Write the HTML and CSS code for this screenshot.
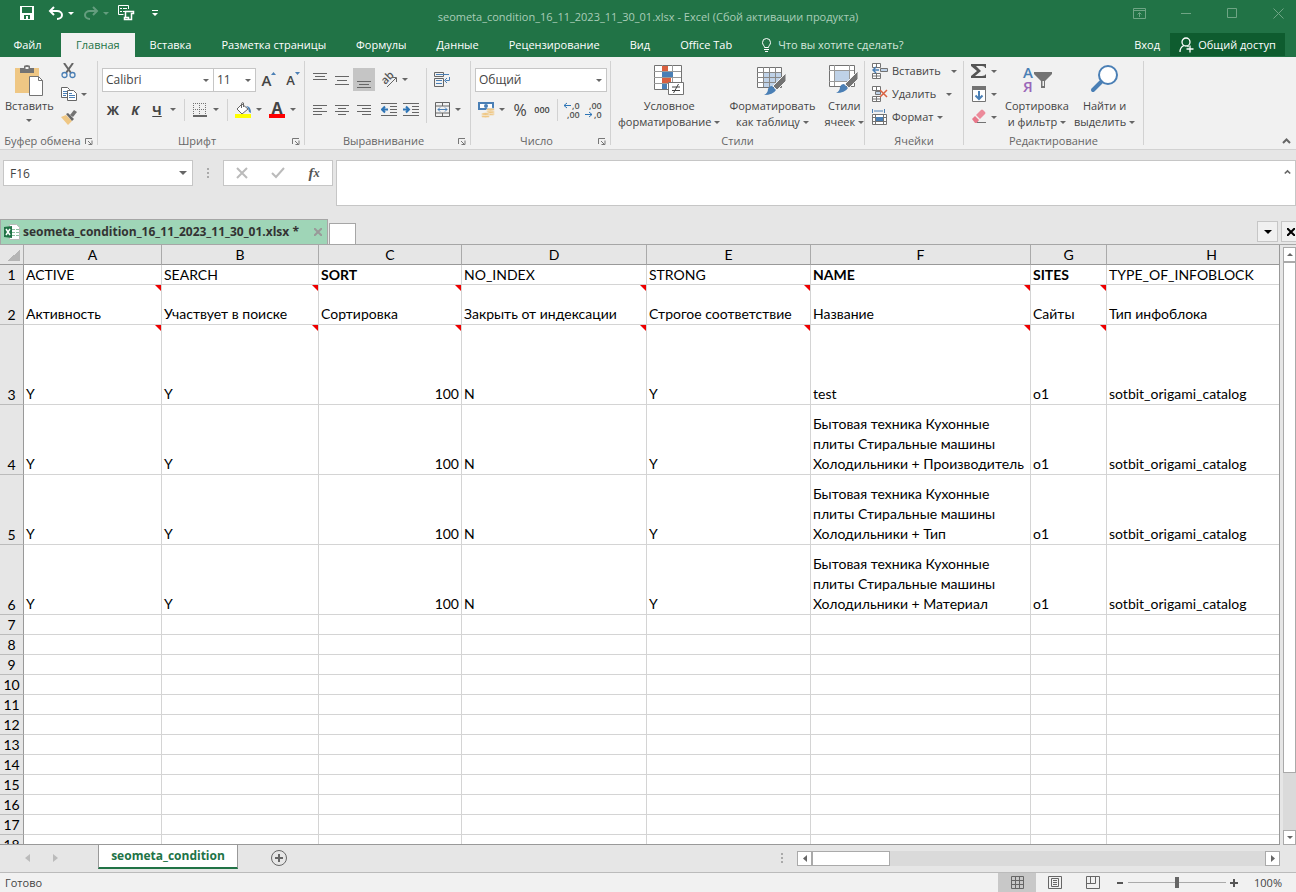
FILE: index.html
```
<!DOCTYPE html>
<html lang="ru">
<head>
    <meta charset="UTF-8">
    <meta name="viewport" content="width=device-width, initial-scale=1.0">
    <title>seometa_condition_16_11_2023_11_30_01.xlsx - Excel</title>
    <link rel="stylesheet" href="styles.css">
</head>
<body>
    <header class="titlebar">
        <div class="quick-access">
            <button class="qa save" aria-label="Сохранить"><svg width="14" height="14" viewBox="0 0 14 14"><path d="M0 0h14v14H0z" fill="#fff"/><path d="M2 1h10v6H2zM4 9h6v4H8v-3H6v3H4z" fill="#217346"/></svg></button>
            <button class="qa undo" aria-label="Отменить"><svg width="16" height="14" viewBox="0 0 16 14" fill="none" stroke="#fff" stroke-width="2"><path d="M6 1L2 5l4 4M2 5h7c3 0 5 2 5 4s-2 4-5 4"/></svg><span class="caret"></span></button>
            <button class="qa redo" aria-label="Вернуть"><svg width="16" height="14" viewBox="0 0 16 14" fill="none" stroke="#fff" stroke-width="2"><path d="M10 1l4 4-4 4M14 5H7C4 5 2 7 2 9s2 4 5 4"/></svg><span class="caret"></span></button>
            <button class="qa touch" aria-label="Режим"><svg width="17" height="16" viewBox="0 0 17 16" fill="none" stroke="#fff"><path d="M10.500 4V.5H.5v9h5M2 3.500h2M5 3.500h4M2 6.500h2M5 6.500h3" /><path d="M7.500 13V6.500h8v2h-2v6h-7v-2h4v2" stroke-width="1.500"/></svg></button>
            <button class="qa more" aria-label="Настройка панели"><svg width="6" height="7" viewBox="0 0 6 7" fill="#fff"><path d="M0 0h6v1H0zM0 3h6L3 6z"/></svg></button>
        </div>
        <div class="doc-title">seometa_condition_16_11_2023_11_30_01.xlsx - Excel (Сбой активации продукта)</div>
        <div class="window-buttons">
            <button aria-label="Параметры ленты"><svg width="13" height="11" viewBox="0 0 13 11"><path d="M.5.5h12v10H.5zM.5 2.500h12M6.500 9V5M4.500 6.500l2-2 2 2"/></svg></button>
            <button aria-label="Свернуть"><svg width="11" height="11" viewBox="0 0 11 11"><path d="M0 5.500h10"/></svg></button>
            <button aria-label="Развернуть"><svg width="11" height="11" viewBox="0 0 11 11"><path d="M.5.5h9v9h-9z"/></svg></button>
            <button aria-label="Закрыть"><svg width="11" height="11" viewBox="0 0 11 11"><path d="M.5.5l10 10M10.500.5l-10 10"/></svg></button>
        </div>
    </header>

    <nav class="ribbon-tabs">
        <button class="tab file">Файл</button>
        <button class="tab active">Главная</button>
        <button class="tab">Вставка</button>
        <button class="tab">Разметка страницы</button>
        <button class="tab">Формулы</button>
        <button class="tab">Данные</button>
        <button class="tab">Рецензирование</button>
        <button class="tab">Вид</button>
        <button class="tab">Office Tab</button>
        <button class="tab tell-me"><svg width="9" height="14" viewBox="0 0 9 14" fill="none" stroke="#fff"><path d="M2.500 9.500C2.500 7.500.5 7 .5 4.500a4 4 0 0 1 8 0C8.500 7 6.500 7.500 6.500 9.500z"/><path d="M2 11.500h5M3 13.500h3"/></svg>Что вы хотите сделать?</button>
        <button class="tab login">Вход</button>
        <button class="share"><svg width="15" height="16" viewBox="0 0 15 16" fill="none" stroke="#fff" stroke-width="1.300"><circle cx="7" cy="5" r="4"/><path d="M5 8.500C2.500 9.500 1 12 1 15M8.500 9l1 1M7.500 12h7M11 8.500v7"/></svg>Общий доступ</button>
    </nav>

    <section class="ribbon">
        <div class="group clipboard">
            <div class="group-body">
                <button class="big paste">
                    <svg width="28" height="31" viewBox="0 0 28 31"><path d="M0 3h24v25H0z" fill="#efc784"/><path d="M5 3h4V1.500Q9 0 12 0t3 1.500V3h4v5H5z" fill="#737373"/><path d="M10.500 2h3v2h-3z" fill="#f1f1f1"/><path d="M14.500 11.500h9l4 4v15h-13z" fill="#fff" stroke="#737373"/><path d="M23.500 11.500v4h4" fill="none" stroke="#737373"/></svg>
                    <span>Вставить</span><span class="caret"></span>
                </button>
                <div class="stack">
                    <button class="row-btn" aria-label="Вырезать"><svg width="15" height="16" viewBox="0 0 15 16" fill="none"><path d="M3 0l7 10M12 0L5 10" stroke="#666" stroke-width="2"/><circle cx="3.500" cy="12" r="2.500" stroke="#4a7fb5" stroke-width="1.300"/><circle cx="11.500" cy="12" r="2.500" stroke="#4a7fb5" stroke-width="1.300"/></svg></button>
                    <button class="row-btn" aria-label="Копировать"><svg width="16" height="14" viewBox="0 0 16 14" fill="#fff" stroke="#666"><path d="M.5.5h6l2 2v8h-8z"/><path d="M2 4.500h4M2 6.500h4M2 8.500h3" stroke="#4a7fb5"/><path d="M6.500 3.500h6l3 3v7h-9z"/><path d="M8 8.500h6M8 10.500h6M8 6.500h3" stroke="#4a7fb5"/></svg><span class="caret"></span></button>
                    <button class="row-btn" aria-label="Формат по образцу"><svg width="16" height="15" viewBox="0 0 16 15"><path d="M0 7l5-2 6 6-4 4z" fill="#efc784"/><path d="M5 4l2-1 6 6-2 2z" fill="#666"/><path d="M9 5l4-5 3 2-4 5z" fill="#737373"/></svg></button>
                </div>
            </div>
            <div class="group-label"><span>Буфер обмена</span><svg class="launcher" width="8" height="7" viewBox="0 0 8 7"><path d="M.5 6V.5H7M3 3l3 3M7 2.500v4H3.500" /></svg></div>
        </div>

        <div class="group font">
            <div class="group-body rows">
                <div class="line">
                    <span class="select-box font-name"><select aria-label="Шрифт"><option>Calibri</option></select><span class="caret"></span></span>
                    <span class="select-box font-size"><select aria-label="Размер шрифта"><option>11</option></select><span class="caret"></span></span>
                    <button class="tool letter" aria-label="Увеличить размер">A<svg width="5" height="3" viewBox="0 0 5 3"><path d="M0 3h5L2.500 0z" fill="#4a7fb5"/></svg></button>
                    <button class="tool letter small" aria-label="Уменьшить размер">A<svg width="5" height="3" viewBox="0 0 5 3"><path d="M0 0h5L2.500 3z" fill="#4a7fb5"/></svg></button>
                </div>
                <div class="line">
                    <button class="tool"><b>Ж</b></button>
                    <button class="tool"><b><i>К</i></b></button>
                    <button class="tool"><b><u>Ч</u></b></button><span class="caret"></span>
                    <span class="vsep"></span>
                    <button class="tool" aria-label="Границы"><svg width="14" height="14" viewBox="0 0 14 14" fill="none" stroke="#737373" stroke-dasharray="1 1"><path d="M.5 0v13M6.500 0v13M12.500 0v13M0 .5h13M0 6.500h13"/><path d="M0 13h14" stroke-width="2" stroke-dasharray="none" stroke="#666"/></svg></button><span class="caret"></span>
                    <span class="vsep"></span>
                    <button class="tool" aria-label="Заливка"><svg width="17" height="16" viewBox="0 0 17 16"><path d="M7 2l6 5-6 5-5-5z" fill="#fff" stroke="#666"/><path d="M6.500 6V1.500Q7 0 8.500 1v4" fill="none" stroke="#666"/><path d="M11 4q5 0 5 7l-2-1-1-4z" fill="#4a7fb5"/><path d="M0 12h16v4H0z" fill="#ff0"/></svg></button><span class="caret"></span>
                    <button class="tool font-color" aria-label="Цвет текста"><b>A</b></button><span class="caret"></span>
                </div>
            </div>
            <div class="group-label"><span>Шрифт</span><svg class="launcher" width="8" height="7" viewBox="0 0 8 7"><path d="M.5 6V.5H7M3 3l3 3M7 2.500v4H3.500" /></svg></div>
        </div>

        <div class="group align">
            <div class="group-body">
                <div class="rows">
                    <div class="line">
                        <button class="tool" aria-label="По верхнему краю"><svg class="lines" width="14" height="16"><path d="M0 1.500h14M2 4.500h10M0 7.500h14"/></svg></button>
                        <button class="tool" aria-label="По середине"><svg class="lines" width="14" height="16"><path d="M0 4.500h14M2 8.500h10M0 12.500h14"/></svg></button>
                        <button class="tool pressed" aria-label="По нижнему краю"><svg class="lines" width="14" height="16"><path d="M0 9.500h14M2 12.500h10M0 15.500h14"/></svg></button>
                        <button class="tool turn" aria-label="Ориентация"><svg class="turn-icon" width="17" height="16" viewBox="0 0 17 16"><text x="1" y="11" transform="rotate(-45 5 8)">ab</text><path d="M6 15l9-9M11 5.500h4.500V10" fill="none" stroke="#666"/></svg></button><span class="caret"></span>
                    </div>
                    <div class="line">
                        <button class="tool" aria-label="По левому краю"><svg class="lines" width="14" height="10"><path d="M0 .5h14M0 3.500h9M0 6.500h14M0 9.500h9"/></svg></button>
                        <button class="tool" aria-label="По центру"><svg class="lines" width="14" height="10"><path d="M0 .5h14M3 3.500h8M0 6.500h14M3 9.500h8"/></svg></button>
                        <button class="tool" aria-label="По правому краю"><svg class="lines" width="14" height="10"><path d="M0 .5h14M5 3.500h9M0 6.500h14M5 9.500h9"/></svg></button>
                        <button class="tool turn" aria-label="Уменьшить отступ"><svg class="lines" width="16" height="13"><path d="M0 .5h16M9 3.500h7M9 6.500h7M9 9.500h7M0 12.500h16"/><path d="M7 6.500H1M4 3.500l-3 3 3 3" class="blue"/></svg></button>
                        <button class="tool" aria-label="Увеличить отступ"><svg class="lines" width="16" height="13"><path d="M0 .5h16M9 3.500h7M9 6.500h7M9 9.500h7M0 12.500h16"/><path d="M0 6.500h6M3 3.500l3 3-3 3" class="blue"/></svg></button>
                    </div>
                </div>
                <span class="vsep tall"></span>
                <div class="rows wrap-col">
                    <div class="line"><button class="tool" aria-label="Перенести текст"><svg width="16" height="15" fill="none" stroke="#666"><path d="M.5.500h9v4h-9zM.5 6.500h9v8h-9z"/><path d="M2 2.500h13M2 8.500h6M2 11.500h6M15.500 5v3.500h-4M13 6l-2.500 2.500L13 11" stroke="#4a7fb5"/></svg></button></div>
                    <div class="line"><button class="tool" aria-label="Объединить"><svg width="15" height="15" fill="none" stroke="#666"><path d="M.5.5h14v14H.5zM.5 4h14M.5 11h14M7.500 0v4M7.500 11v4"/><path d="M3 7.500h9M5 5.500l-2 2 2 2M10 5.500l2 2-2 2" stroke="#4a7fb5"/></svg></button><span class="caret"></span></div>
                </div>
            </div>
            <div class="group-label"><span>Выравнивание</span><svg class="launcher" width="8" height="7" viewBox="0 0 8 7"><path d="M.5 6V.5H7M3 3l3 3M7 2.500v4H3.500" /></svg></div>
        </div>

        <div class="group number">
            <div class="group-body rows">
                <div class="line"><span class="select-box number-format"><select aria-label="Числовой формат"><option>Общий</option></select><span class="caret"></span></span></div>
                <div class="line">
                    <button class="tool" aria-label="Финансовый формат"><svg width="17" height="16" viewBox="0 0 17 16"><path d="M0 0h16v8H0z" fill="#4a7fb5"/><path d="M2 2h12v4H2z" fill="#fff"/><circle cx="8" cy="4" r="2" fill="#4a7fb5"/><g fill="#efc784" stroke="#f1f1f1" stroke-width=".6"><ellipse cx="12.500" cy="12" rx="4" ry="1.500"/><ellipse cx="12.500" cy="10" rx="4" ry="1.500"/><ellipse cx="12.500" cy="7.500" rx="4" ry="1.500"/><ellipse cx="7.500" cy="14.300" rx="4" ry="1.500"/><ellipse cx="7.500" cy="12" rx="4" ry="1.500"/></g></svg></button><span class="caret"></span>
                    <button class="tool percent">%</button>
                    <button class="tool thousands">000</button>
                    <span class="vsep"></span>
                    <button class="tool" aria-label="Увеличить разрядность"><svg class="digits" width="18" height="20" viewBox="0 0 18 20"><text x="9" y="9">,0</text><text x="4" y="18">,00</text><path d="M8 5.500H1M4 3L1 5.500 4 8"/></svg></button>
                    <button class="tool" aria-label="Уменьшить разрядность"><svg class="digits" width="18" height="20" viewBox="0 0 18 20"><text x="4" y="9">,00</text><text x="9" y="18">,0</text><path d="M0 14.500h7M4 12l3 2.500L4 17"/></svg></button>
                </div>
            </div>
            <div class="group-label"><span>Число</span><svg class="launcher" width="8" height="7" viewBox="0 0 8 7"><path d="M.5 6V.5H7M3 3l3 3M7 2.500v4H3.500" /></svg></div>
        </div>

        <div class="group styles">
            <div class="group-body">
                <button class="big"><svg width="30" height="31" viewBox="0 0 30 31"><path d="M.5.5h27v24H.5z" fill="#fff" stroke="#737373"/><path d="M8.500 0v24M18.500 0v24M0 6.500h27M0 12.500h27M0 18.500h27" stroke="#999"/><path d="M8 1h6v5H8zM8 13h9v5H8z" fill="#d9603f"/><path d="M8 7h11v5H8zM8 19h5v5H8z" fill="#4a7fb5"/><path d="M14.500 17.500h15v12h-15z" fill="#fff" stroke="#737373"/><path d="M18 22h8M18 25.500h8M24.500 19l-5 9" stroke="#444" fill="none"/></svg><span>Условное</span><span class="last">форматирование<span class="caret"></span></span></button>
                <button class="big"><svg width="30" height="31" viewBox="0 0 30 31"><path d="M.5 2.500h24v20H.5z" fill="#fff" stroke="#737373"/><path d="M7 8h17v14H7z" fill="#bfd2e8"/><path d="M6.500 2v20M12.500 2v20M18.500 2v20M0 7.500h24M0 12.500h24M0 17.500h24" stroke="#888"/><path d="M29 8v8l-9 9-4-4z" fill="#737373" stroke="#f1f1f1"/><path d="M15 21l4 4q-3 5-12 5 4-2 4-6 1-3 4-3z" fill="#4a7fb5"/></svg><span>Форматировать</span><span class="last">как таблицу<span class="caret"></span></span></button>
                <button class="big"><svg width="30" height="31" viewBox="0 0 30 31"><path d="M.5.5h25v21H.5z" fill="#fff" stroke="#737373"/><path d="M6 6h14v11H6z" fill="#bfd2e8"/><path d="M5.500 0v21M20.500 0v21M0 5.500h25M0 16.500h25" stroke="#999"/><path d="M29 6v8l-9 9-4-4z" fill="#737373" stroke="#f1f1f1"/><path d="M15 19l4 4q-3 5-12 5 4-2 4-6 1-3 4-3z" fill="#4a7fb5"/></svg><span>Стили</span><span class="last">ячеек<span class="caret"></span></span></button>
            </div>
            <div class="group-label"><span>Стили</span></div>
        </div>

        <div class="group cells">
            <div class="group-body stack">
                <button class="row-btn"><svg width="16" height="16" fill="#fff" stroke="#737373"><path d="M.5.5h8v4h-8zM4.500.5v4M.5 10.500h8v5h-8zM4.500 10.500v5M.5 13h8"/><path d="M8.500 5.500h7v3h-7z" fill="#bfd2e8"/><path d="M7 7H1M4 4L1 7l3 3" stroke="#4a7fb5" stroke-width="1.500" fill="none"/></svg>Вставить<span class="caret wide"></span></button>
                <button class="row-btn"><svg width="16" height="16" fill="#fff" stroke="#737373"><path d="M.5.5h8v4h-8zM4.500.5v4M.5 10.500h8v5h-8zM4.500 10.500v5M.5 13h8"/><path d="M3.500 5.500h5v3h-5z" fill="#bfd2e8"/><path d="M8 4l7 7M15 4l-7 7" stroke="#d9603f" stroke-width="1.500"/></svg>Удалить<span class="caret wide"></span></button>
                <button class="row-btn"><svg width="16" height="16" fill="#fff" stroke="#737373"><path d="M.5 5.500h14v10H.5zM3.500 5v10M11.500 5v10M0 8.500h14M0 12.500h14"/><path d="M4 8h7v4H4z" fill="#4a7fb5" stroke="none"/><path d="M.5 0v4M12.500 0v4M2 2h9" stroke="#4a7fb5"/></svg>Формат<span class="caret"></span></button>
            </div>
            <div class="group-label"><span>Ячейки</span></div>
        </div>

        <div class="group editing">
            <div class="group-body">
                <div class="stack">
                    <button class="row-btn" aria-label="Автосумма"><svg width="16" height="16"><path d="M0 1h15v4h-1q0-2-3-2H5l5 5-6 5h7q3 0 4-2v4H0v-2l6-5-6-5z" fill="#555"/></svg><span class="caret"></span></button>
                    <button class="row-btn" aria-label="Заполнить"><svg width="16" height="16"><path d="M1.500.5h13v15h-13z" fill="#fff" stroke="#737373"/><path d="M1 0h14v4H1z" fill="#737373"/><path d="M8 5v8M4.500 9.500L8 13l3.500-3.500" stroke="#4a7fb5" stroke-width="2" fill="none"/></svg><span class="caret"></span></button>
                    <button class="row-btn" aria-label="Очистить"><svg width="16" height="16"><path d="M1 10l3-3 4 4-2 3H4z" fill="#e8798b"/><path d="M5 6l5-5q1-1 2 0l2 2q1 1 0 2L9 10z" fill="#ec8a9a"/><path d="M6 13.500h9" stroke="#737373"/></svg><span class="caret"></span></button>
                </div>
                <button class="big sort"><svg width="30" height="31" viewBox="0 0 30 31"><text x="1" y="13" class="sort-a">А</text><text x="1" y="27" class="sort-z">Я</text><path d="M12 7h18v2l-7 7v7h-4v-7l-7-7z" fill="#737373"/><path d="M20.500 16h1.500v5h-1.500z" fill="#f1f1f1"/></svg><span>Сортировка</span><span class="last">и фильтр<span class="caret"></span></span></button>
                <button class="big"><svg width="30" height="31" viewBox="0 0 30 31"><circle cx="18" cy="10" r="9" fill="#fff" stroke="#4a7fb5" stroke-width="2"/><path d="M11 17L3 25" stroke="#4a7fb5" stroke-width="4" stroke-linecap="round"/></svg><span>Найти и</span><span class="last">выделить<span class="caret"></span></span></button>
            </div>
            <div class="group-label"><span>Редактирование</span></div>
        </div>
        <button class="collapse" aria-label="Свернуть ленту"><svg width="9" height="6" viewBox="0 0 9 6"><path d="M1 5l3.500-3.500L8 5" fill="none" stroke="#666" stroke-width="2"/></svg></button>
    </section>

    <section class="formula-bar">
        <span class="select-box name-box"><input type="text" value="F16" aria-label="Имя ячейки"><span class="caret"></span></span>
        <span class="grip"></span>
        <div class="fx-buttons">
            <button aria-label="Отмена"><svg width="12" height="12"><path d="M1 1l10 10M11 1L1 11" stroke="#bbb" stroke-width="2"/></svg></button>
            <button aria-label="Ввод"><svg width="14" height="12"><path d="M1 6l4 4 8-9" stroke="#bbb" stroke-width="2" fill="none"/></svg></button>
            <button class="fx">f<small>x</small></button>
        </div>
        <div class="formula-box">
            <textarea class="formula" aria-label="Строка формул"></textarea>
            <svg class="expand" width="7" height="6" viewBox="0 0 9 6"><path d="M1 5l3.500-3.500L8 5" fill="none" stroke="#666" stroke-width="2"/></svg>
        </div>
    </section>

    <div class="doc-tabs">
        <button class="doc-tab"><svg width="16" height="16"><path d="M5.500.5h7l3 3v12h-10z" fill="#fff" stroke="#bbb"/><path d="M8 5.500h3M12 5.500h3M8 8.500h3M12 8.500h3M8 11.500h3M12 11.500h3" stroke="#8cc0a0"/><path d="M0 3l8-1v12l-8-1z" fill="#217346"/><path d="M2 5l4 6M6 5l-4 6" stroke="#fff" stroke-width="1.500"/></svg><span>seometa_condition_16_11_2023_11_30_01.xlsx *</span><svg class="tab-x" width="8" height="8"><path d="M0 0l8 8M8 0L0 8" stroke="#999" stroke-width="2"/></svg></button>
        <button class="new-tab" aria-label="Новая вкладка"></button>
        <button class="mini" aria-label="Список вкладок"><span class="caret black"></span></button>
        <button class="mini last-mini" aria-label="Закрыть вкладку"><svg width="8" height="8"><path d="M0 0l8 8M8 0L0 8" stroke="#000" stroke-width="2"/></svg></button>
    </div>

    <main class="sheet">
        <div class="grid">
            <table>
                <colgroup><col class="c-num"><col class="c-a"><col class="c-b"><col class="c-c"><col class="c-d"><col class="c-e"><col class="c-f"><col class="c-g"><col class="c-h"></colgroup>
                <thead>
                    <tr><th class="corner"></th><th>A</th><th>B</th><th>C</th><th>D</th><th>E</th><th>F</th><th>G</th><th>H</th></tr>
                </thead>
                <tbody id="rows">
                    <tr class="h20"><th>1</th><td>ACTIVE</td><td>SEARCH</td><td><b>SORT</b></td><td>NO_INDEX</td><td>STRONG</td><td><b>NAME</b></td><td><b>SITES</b></td><td>TYPE_OF_INFOBLOCK</td></tr>
                    <tr class="h40 notes"><th>2</th><td>Активность</td><td>Участвует в поиске</td><td>Сортировка</td><td>Закрыть от индексации</td><td>Строгое соответствие</td><td>Название</td><td>Сайты</td><td>Тип инфоблока</td></tr>
                    <tr class="h80 notes"><th>3</th><td>Y</td><td>Y</td><td class="num">100</td><td>N</td><td>Y</td><td>test</td><td>o1</td><td>sotbit_origami_catalog</td></tr>
                    <tr class="h70"><th>4</th><td>Y</td><td>Y</td><td class="num">100</td><td>N</td><td>Y</td><td>Бытовая техника Кухонные<br>плиты Стиральные машины<br>Холодильники + Производитель</td><td>o1</td><td>sotbit_origami_catalog</td></tr>
                    <tr class="h70"><th>5</th><td>Y</td><td>Y</td><td class="num">100</td><td>N</td><td>Y</td><td>Бытовая техника Кухонные<br>плиты Стиральные машины<br>Холодильники + Тип</td><td>o1</td><td>sotbit_origami_catalog</td></tr>
                    <tr class="h70"><th>6</th><td>Y</td><td>Y</td><td class="num">100</td><td>N</td><td>Y</td><td>Бытовая техника Кухонные<br>плиты Стиральные машины<br>Холодильники + Материал</td><td>o1</td><td>sotbit_origami_catalog</td></tr>
                </tbody>
            </table>
        </div>
        <div class="vscroll">
            <button class="scroll-btn" aria-label="Вверх"><span class="caret up"></span></button>
            <div class="vthumb"></div>
            <button class="scroll-btn bottom" aria-label="Вниз"><span class="caret"></span></button>
        </div>
    </main>

    <footer class="sheet-bar">
        <div class="sheet-nav">
            <button aria-label="Назад"><svg width="5" height="8"><path d="M5 0v8L0 4z" fill="#bbb"/></svg></button>
            <button aria-label="Вперёд"><svg width="5" height="8"><path d="M0 0v8l5-4z" fill="#bbb"/></svg></button>
        </div>
        <button class="sheet-tab">seometa_condition</button>
        <button class="add-sheet" aria-label="Новый лист"><svg width="16" height="16" fill="none" stroke="#666"><circle cx="8" cy="8" r="7.500"/><path d="M4 8h8M8 4v8" stroke-width="2"/></svg></button>
        <span class="grip hgrip"></span>
        <div class="hscroll">
            <button class="scroll-btn" aria-label="Влево"><svg width="4" height="7"><path d="M4 0v7L0 3.500z" fill="#666"/></svg></button>
            <div class="hthumb"></div>
            <button class="scroll-btn right" aria-label="Вправо"><svg width="4" height="7"><path d="M0 0v7l4-3.500z" fill="#666"/></svg></button>
        </div>
    </footer>

    <div class="status-bar">
        <span class="ready">Готово</span>
        <button class="view on" aria-label="Обычный"><svg width="13" height="13"><path d="M.5.5h12v12H.5zM4.500 0v13M8.500 0v13M0 4.500h13M0 8.500h13"/></svg></button>
        <button class="view" aria-label="Разметка"><svg width="14" height="13"><path d="M.5.5h13v12H.5zM3.500 2.500h7v8h-7zM5 4.500h4M5 6.500h4M5 8.500h4"/></svg></button>
        <button class="view" aria-label="Страничный"><svg width="14" height="13"><path d="M.5.5h13v12H.5zM4.500 0v7.500M9.500 0v7.500M0 7.500h9.500"/></svg></button>
        <button class="zoom-btn" aria-label="Уменьшить"><svg width="6" height="8"><path d="M0 4h6" stroke="#555" stroke-width="2"/></svg></button>
        <input class="zoom" type="range" min="0" max="100" value="50" aria-label="Масштаб">
        <button class="zoom-btn" aria-label="Увеличить"><svg width="8" height="8"><path d="M0 4h8M4 0v8" stroke="#555" stroke-width="2"/></svg></button>
        <span class="percent-label">100%</span>
    </div>

    <script>
        // Empty rows below the data
        const rows = document.getElementById('rows');
        for (let i = 7; i <= 18; i++) {
            const row = document.createElement('tr');
            row.className = 'h20';
            row.innerHTML = `<th>${i}</th>` + '<td></td>'.repeat(8);
            rows.appendChild(row);
        }
    </script>
</body>
</html>
```
FILE: styles.css
```
* {
    box-sizing: border-box;
}
body {
    margin: 0;
    height: 100vh;
    display: flex;
    flex-direction: column;
    overflow: hidden;
    background: #e6e6e6;
    color: #444;
    font: 11px/16px "Open Sans", "Noto Sans", sans-serif;
}
button, input, select, textarea {
    font: inherit;
    color: inherit;
    margin: 0;
    padding: 0;
    border: 0;
    border-radius: 0;
    background: none;
    white-space: nowrap;
}
button {
    display: flex;
    align-items: center;
    justify-content: center;
}
svg {
    display: block;
    flex: none;
}
.caret {
    flex: none;
    border: 3px solid transparent;
    border-top-color: #666;
    border-bottom: 0;
}
.caret.up {
    border-top: 0;
    border-bottom: 3px solid #666;
}
.caret.black {
    border-width: 4px 4px 0;
    border-top-color: #000;
}

/* Title bar */
.titlebar {
    display: flex;
    justify-content: space-between;
    height: 33px;
    flex: none;
    background: #217346;
    color: #fff;
}
.quick-access {
    display: flex;
    align-items: center;
    gap: 9px;
    width: 200px;
    padding: 0 0 7px 20px;
}
.qa {
    gap: 4px;
}
.qa .caret {
    border-top-color: #fff;
}
.save {
    margin-right: 5px;
}
.redo {
    opacity: .3;
}
.more {
    margin-left: 8px;
}
.doc-title {
    padding-top: 9px;
    color: #a9cdb8;
}
.window-buttons {
    display: flex;
    justify-content: flex-end;
    gap: 35px;
    width: 200px;
    padding: 0 12px 7px 0;
}
.window-buttons path {
    fill: none;
    stroke: #6fa585;
}

/* Ribbon tabs */
.ribbon-tabs {
    display: flex;
    height: 24px;
    flex: none;
    padding-right: 11px;
    background: #217346;
    color: #fff;
}
.tab {
    padding: 0 15px;
}
.file {
    width: 61px;
    padding: 0 6px 0 0;
}
.tab.active {
    background: #f1f1f1;
    color: #217346;
}
.tell-me {
    gap: 7px;
    color: #d5e7dc;
}
.login {
    margin-left: auto;
    padding: 0 10px;
}
.share {
    gap: 4px;
    width: 115px;
    height: 23px;
    background: #0e5c2f;
}

/* Ribbon */
.ribbon {
    display: flex;
    height: 93px;
    flex: none;
    padding: 4px 0;
    background: #f1f1f1;
    border-bottom: 1px solid #d2d2d2;
}
.group {
    display: flex;
    flex-direction: column;
    border-right: 1px solid #d2d2d2;
}
.group-body {
    display: flex;
    height: 72px;
    flex: none;
}
.rows {
    display: flex;
    flex-direction: column;
    gap: 7px;
    padding-top: 7px;
}
.line {
    display: flex;
    align-items: center;
    height: 23px;
}
.group-label {
    display: flex;
    justify-content: center;
    align-items: center;
    height: 16px;
    flex: none;
    margin-bottom: -4px;
    padding: 0 4px;
    color: #666;
}
.group-label span {
    flex: 1;
    text-align: center;
}
.launcher path {
    fill: none;
    stroke: #777;
}
.clipboard {
    width: 98px;
}
.clipboard .group-label {
    padding-left: 0;
    white-space: nowrap;
}
.font {
    width: 207px;
}
.align {
    width: 166px;
}
.number {
    width: 140px;
}
.styles {
    width: 254px;
}
.cells {
    width: 99px;
}
.editing {
    width: 180px;
}
.font .group-body, .align .group-body, .number .group-body {
    padding-left: 4px;
}
.align .rows {
    flex: none;
}
.align .group-body {
    padding-top: 7px;
}
.align .group-body .rows {
    padding-top: 0;
}
.styles .group-body {
    gap: 4px;
    padding-left: 2px;
}
.big {
    flex-direction: column;
    justify-content: flex-start;
    padding: 4px 0 0 5px;
}
.big svg {
    margin-bottom: 2px;
}
.big > .caret {
    margin-top: 5px;
}
.sort {
    padding-left: 8px;
}
.last {
    display: flex;
    align-items: center;
    gap: 3px;
}
.stack {
    display: flex;
    flex-direction: column;
    gap: 7px;
    padding: 2px 0 0 7px;
}
.row-btn {
    justify-content: flex-start;
    gap: 4px;
    height: 16px;
}
.caret.wide {
    margin-left: 6px;
}
.select-box {
    position: relative;
    display: block;
    background: #fff;
    border: 1px solid #c6c6c6;
    font-size: 12px;
}
.select-box select, .select-box input {
    appearance: none;
    display: block;
    width: 100%;
    height: 100%;
    padding: 0 3px;
}
.select-box .caret {
    position: absolute;
    right: 4px;
    top: 10px;
}
.font-name {
    width: 112px;
    height: 24px;
}
.font-size {
    width: 43px;
    height: 24px;
    margin-left: -1px;
}
.number-format {
    width: 132px;
    height: 24px;
}
.tool {
    width: 22px;
    height: 23px;
    font-size: 13px;
}
.tool + .caret {
    margin-left: 2px;
}
.letter {
    align-items: center;
    margin-left: 2px;
    font-size: 15px;
    font-weight: 600;
}
.letter svg {
    align-self: flex-start;
    margin-top: 4px;
}
.letter.small {
    font-size: 13px;
}
.vsep {
    width: 1px;
    height: 22px;
    margin: 0 4px 0 8px;
    background: #d2d2d2;
}
.vsep.tall {
    height: 55px;
    margin: 0 4px 0 4px;
}
.number .vsep {
    margin: 0 3px 0 4px;
}
.font-color {
    margin-left: 4px;
    font-size: 16px;
}
.font-color b {
    width: 16px;
    height: 17px;
    line-height: 14px;
    border-bottom: 4px solid #f00;
}
.pressed {
    background: #c5c5c5;
}
.turn {
    margin-left: 3px;
}
.turn-icon {
    overflow: visible;
}
.turn-icon text {
    font-size: 11px;
    font-weight: 600;
    fill: #555;
}
.lines path {
    fill: none;
    stroke: #666;
}
.lines .blue {
    stroke: #2e75b6;
    stroke-width: 2;
}
.percent {
    margin-left: 4px;
    font-size: 16px;
}
.thousands {
    font-size: 9px;
    font-weight: 600;
}
.digits {
    overflow: visible;
}
.digits text {
    font-size: 9px;
    font-weight: 600;
    fill: #555;
}
.digits path {
    fill: none;
    stroke: #2e75b6;
    stroke-width: 1;
}
.sort svg {
    overflow: visible;
}
.sort-a, .sort-z {
    font-size: 15px;
    font-weight: 600;
    fill: #4a7fb5;
}
.sort-z {
    fill: #9a66b8;
}
.collapse {
    align-self: flex-end;
    margin: 0 5px 1px auto;
}

/* Formula bar */
.formula-bar {
    display: flex;
    align-items: flex-start;
    height: 69px;
    flex: none;
    padding: 10px 0 0 3px;
}
.name-box {
    width: 190px;
    height: 26px;
}
.name-box input {
    padding-left: 6px;
}
.name-box .caret {
    right: 5px;
    border-width: 4px 4px 0;
}
.grip {
    width: 2px;
    height: 10px;
    margin: 8px 14px 0;
    background: repeating-linear-gradient(#aaa 0 2px, transparent 2px 4px);
}
.fx-buttons {
    display: flex;
    width: 110px;
    height: 26px;
    background: #fff;
    border: 1px solid #c6c6c6;
}
.fx-buttons button {
    flex: 1;
}
.fx {
    font: italic bold 15px/16px "Liberation Serif", serif;
    color: #555;
}
.formula-box {
    position: relative;
    flex: 1;
    height: 46px;
    margin-left: 3px;
}
.formula {
    display: block;
    width: 100%;
    height: 100%;
    resize: none;
    background: #fff;
    border: 1px solid #c6c6c6;
}
.expand {
    position: absolute;
    right: 5px;
    top: 9px;
}

/* Document tabs */
.doc-tabs {
    display: flex;
    align-items: flex-end;
    height: 26px;
    flex: none;
    border-bottom: 1px solid #a6a6a6;
}
.doc-tab {
    gap: 3px;
    width: 328px;
    height: 25px;
    justify-content: flex-start;
    padding: 0 5px 0 3px;
    background: #9fd5b7;
    border: 1px solid #a6a6a6;
    border-bottom: 0;
    color: #333;
    font-size: 12px;
    font-weight: bold;
}
.tab-x {
    margin-left: auto;
}
.new-tab {
    width: 27px;
    height: 21px;
    margin-left: 1px;
    background: #fff;
    border: 1px solid #a6a6a6;
    border-bottom: 0;
}
.mini {
    width: 21px;
    height: 21px;
    margin: 0 0 2px auto;
    background: #f0f0f0;
    border: 1px solid #c6c6c6;
}
.last-mini {
    width: 15px;
    margin-left: 3px;
    padding-left: 3px;
    border-right: 0;
}

/* Sheet */
.sheet {
    display: flex;
    flex: 1;
    min-height: 0;
}
.grid {
    flex: 1;
    min-width: 0;
    overflow: hidden;
    border-right: 1px solid #999;
    border-bottom: 1px solid #999;
}
table {
    width: 1317px;
    table-layout: fixed;
    border-collapse: separate;
    border-spacing: 0;
    background: #fff;
    color: #000;
    font: 14px/20px Lato, "Open Sans", sans-serif;
}
.c-num {
    width: 24px;
}
.c-a {
    width: 138px;
}
.c-b {
    width: 157px;
}
.c-c {
    width: 143px;
}
.c-d {
    width: 185px;
}
.c-e {
    width: 164px;
}
.c-f {
    width: 220px;
}
.c-g {
    width: 76px;
}
.c-h {
    width: 210px;
}
th {
    padding: 0;
    background: #e6e6e6;
    border-right: 1px solid #999;
    border-bottom: 1px solid #bbb;
    font-weight: normal;
    vertical-align: bottom;
    line-height: 19px;
}
thead th {
    height: 20px;
    border-right-color: #aaa;
    border-bottom-color: #999;
}
.corner {
    background: linear-gradient(135deg, transparent 50%, #b5b5b5 50%) no-repeat 8px 4px / 12px 12px #e6e6e6;
}
td {
    position: relative;
    padding: 0 2px;
    border-right: 1px solid #d4d4d4;
    border-bottom: 1px solid #d4d4d4;
    vertical-align: bottom;
    white-space: nowrap;
    line-height: 20px;
}
.h20 td {
    line-height: 19px;
}
.h20 {
    height: 20px;
}
.h40 {
    height: 40px;
}
.h70 {
    height: 70px;
}
.h80 {
    height: 80px;
}
.num {
    text-align: right;
}
/* Red comment marks in the cell corner */
.notes td::after {
    content: "";
    position: absolute;
    top: 0;
    right: 0;
    border-top: 6px solid #e00;
    border-left: 6px solid transparent;
}
.vscroll {
    display: flex;
    flex-direction: column;
    width: 13px;
    margin: 2px 0 0 3px;
    background: #dadada;
}
.scroll-btn {
    width: 100%;
    height: 15px;
    background: #fff;
    border: 1px solid #aaa;
}
.vthumb {
    height: 511px;
    background: #fff;
    border: 1px solid #aaa;
}
.bottom {
    margin-top: auto;
}

/* Sheet tabs */
.sheet-bar {
    display: flex;
    align-items: flex-start;
    height: 28px;
    flex: none;
    padding-right: 16px;
    border-bottom: 1px solid #bbb;
}
.sheet-nav {
    display: flex;
    gap: 23px;
    width: 98px;
    padding: 9px 0 0 25px;
}
.sheet-tab {
    width: 140px;
    height: 24px;
    background: #fff;
    border: 1px solid #999;
    border-top: 0;
    border-bottom: 2px solid #217346;
    color: #217346;
    font-size: 12px;
    font-weight: bold;
}
.add-sheet {
    margin: 5px auto 0 33px;
}
.hscroll {
    display: flex;
    width: 483px;
    height: 15px;
    margin-top: 6px;
    background: #dadada;
}
.hscroll .scroll-btn {
    width: 15px;
}
.hthumb {
    width: 78px;
    background: #fff;
    border: 1px solid #aaa;
}
.right {
    margin-left: auto;
}

/* Status bar */
.status-bar {
    display: flex;
    align-items: center;
    height: 19px;
    flex: none;
    padding: 0 14px 0 5px;
    background: #f1f1f1;
}
.ready {
    margin-right: auto;
}
.view {
    width: 38px;
    height: 19px;
}
.view path {
    fill: none;
    stroke: #666;
}
.view.on {
    background: #c8c8c8;
}
.zoom-btn {
    width: 16px;
}
.zoom {
    appearance: none;
    width: 98px;
    height: 12px;
    background: linear-gradient(#aaa, #aaa) no-repeat 0 5px / 100% 1px;
}
.zoom::-webkit-slider-thumb {
    appearance: none;
    width: 4px;
    height: 11px;
    background: #666;
}
.percent-label {
    width: 40px;
    text-align: right;
}
```
